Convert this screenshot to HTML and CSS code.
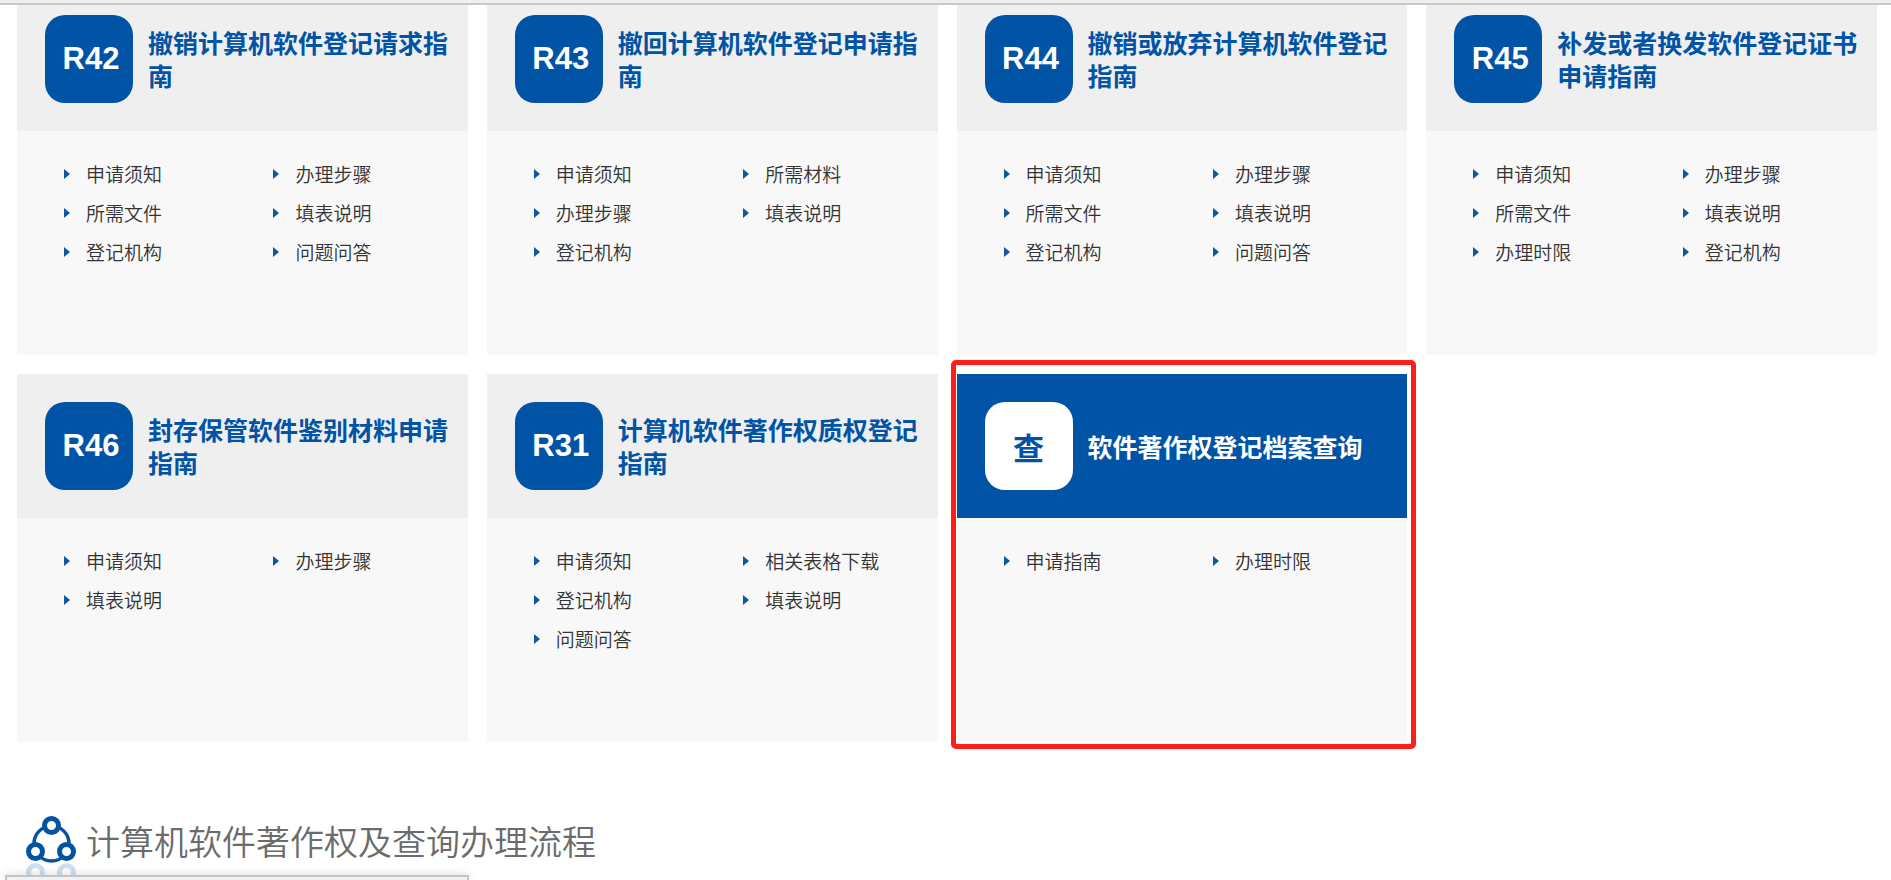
FILE: index.html
```html
<!DOCTYPE html>
<html lang="zh-CN">
  <head>
    <meta charset="utf-8">
    <meta name="viewport" content="width=device-width, initial-scale=1.0">
    <title>软件著作权登记</title>
    <link rel="stylesheet" href="styles.css">
  </head>
  <body>
    <div class="top-bar"></div>

    <main class="page">
      <div class="guide-list">
        <section class="card">
          <div class="card-head">
            <span class="badge">R42</span>
            <h3 class="card-title">撤销计算机软件登记请求指南</h3>
          </div>
          <ul class="card-links">
            <li><a href="#">申请须知</a></li>
            <li><a href="#">办理步骤</a></li>
            <li><a href="#">所需文件</a></li>
            <li><a href="#">填表说明</a></li>
            <li><a href="#">登记机构</a></li>
            <li><a href="#">问题问答</a></li>
          </ul>
        </section>

        <section class="card">
          <div class="card-head">
            <span class="badge">R43</span>
            <h3 class="card-title">撤回计算机软件登记申请指南</h3>
          </div>
          <ul class="card-links">
            <li><a href="#">申请须知</a></li>
            <li><a href="#">所需材料</a></li>
            <li><a href="#">办理步骤</a></li>
            <li><a href="#">填表说明</a></li>
            <li><a href="#">登记机构</a></li>
          </ul>
        </section>

        <section class="card">
          <div class="card-head">
            <span class="badge">R44</span>
            <h3 class="card-title">撤销或放弃计算机软件登记指南</h3>
          </div>
          <ul class="card-links">
            <li><a href="#">申请须知</a></li>
            <li><a href="#">办理步骤</a></li>
            <li><a href="#">所需文件</a></li>
            <li><a href="#">填表说明</a></li>
            <li><a href="#">登记机构</a></li>
            <li><a href="#">问题问答</a></li>
          </ul>
        </section>

        <section class="card">
          <div class="card-head">
            <span class="badge">R45</span>
            <h3 class="card-title">补发或者换发软件登记证书申请指南</h3>
          </div>
          <ul class="card-links">
            <li><a href="#">申请须知</a></li>
            <li><a href="#">办理步骤</a></li>
            <li><a href="#">所需文件</a></li>
            <li><a href="#">填表说明</a></li>
            <li><a href="#">办理时限</a></li>
            <li><a href="#">登记机构</a></li>
          </ul>
        </section>

        <section class="card">
          <div class="card-head">
            <span class="badge">R46</span>
            <h3 class="card-title">封存保管软件鉴别材料申请指南</h3>
          </div>
          <ul class="card-links">
            <li><a href="#">申请须知</a></li>
            <li><a href="#">办理步骤</a></li>
            <li><a href="#">填表说明</a></li>
          </ul>
        </section>

        <section class="card">
          <div class="card-head">
            <span class="badge">R31</span>
            <h3 class="card-title">计算机软件著作权质权登记指南</h3>
          </div>
          <ul class="card-links">
            <li><a href="#">申请须知</a></li>
            <li><a href="#">相关表格下载</a></li>
            <li><a href="#">登记机构</a></li>
            <li><a href="#">填表说明</a></li>
            <li><a href="#">问题问答</a></li>
          </ul>
        </section>

        <section class="card active">
          <div class="card-head">
            <span class="badge">查</span>
            <h3 class="card-title">软件著作权登记档案查询</h3>
          </div>
          <ul class="card-links">
            <li><a href="#">申请指南</a></li>
            <li><a href="#">办理时限</a></li>
          </ul>
        </section>
      </div>

      <div class="section-header">
        <svg class="section-icon" viewBox="0 0 50 64" fill="none">
          <g stroke="#0353a3">
            <circle cx="25.5" cy="28.5" r="17.5" stroke-width="3.5"></circle>
            <circle cx="25.5" cy="10.5" r="7" fill="#fff" stroke-width="5"></circle>
            <circle cx="9.5" cy="36.5" r="7" fill="#fff" stroke-width="5"></circle>
            <circle cx="40.5" cy="36.5" r="7" fill="#fff" stroke-width="5"></circle>
          </g>
          <!-- reflection -->
          <g stroke="#0353a3" stroke-width="5" opacity="0.18">
            <circle cx="9.5" cy="57.5" r="7"></circle>
            <circle cx="40.5" cy="57.5" r="7"></circle>
          </g>
        </svg>
        <h2 class="section-title">计算机软件著作权及查询办理流程</h2>
      </div>
    </main>

    <div class="status-bar"></div>
  </body>
</html>
```

FILE: styles.css
```css
* {
  margin: 0;
  padding: 0;
  box-sizing: border-box;
}

body {
  height: 100vh;
  overflow: hidden;
  background: #fff;
  font-family: "Noto Sans CJK SC", sans-serif;
  color: #333;
}

.top-bar {
  position: relative;
  z-index: 10;
  height: 5px;
  background: #efefef;
  border-bottom: 2px solid #c8c8c8;
}

.page {
  padding: 0 14px 0 17px;
}

/* list is scrolled a little way under the top bar */
.guide-list {
  display: grid;
  grid-template-columns: repeat(4, 1fr);
  gap: 19px;
  margin-top: -18px;
}

.card {
  position: relative;
  display: flex;
  flex-direction: column;
  background: #f8f8f8;
}

.card-head {
  display: flex;
  align-items: center;
  gap: 15px;
  height: 144px;
  padding: 0 0 0 28px;
  background: #efefef;
}

.badge {
  flex: none;
  display: flex;
  align-items: center;
  justify-content: center;
  width: 88px;
  height: 88px;
  padding-left: 4px;
  border-radius: 20px;
  background: #0053a5;
  color: #fff;
  font-family: "Liberation Sans", "Noto Sans CJK SC", sans-serif;
  font-size: 31px;
  font-weight: bold;
}

.card-title {
  font-size: 25px;
  line-height: 33px;
  font-weight: bold;
  color: #0053a5;
}

.card-links {
  display: grid;
  grid-template-columns: 1fr 1fr;
  align-content: start;
  min-height: 224px;
  padding: 23px 16px;
  list-style: none;
}

.card-links li {
  display: flex;
  align-items: center;
  padding-left: 31px;
  line-height: 39px;
}

.card-links li::before {
  content: "";
  margin-right: 16px;
  border-left: 6px solid #0f579f;
  border-top: 5px solid transparent;
  border-bottom: 5px solid transparent;
}

.card-links a {
  font-size: 19px;
  font-weight: 350;
  color: #333;
  text-decoration: none;
}

.active .card-head {
  background: #0053a5;
}

.active .badge {
  padding-left: 0;
  background: #fff;
  color: #0053a5;
}

.active .card-title {
  color: #fff;
}

.active::after {
  content: "";
  position: absolute;
  top: -14px;
  right: -9px;
  bottom: -7px;
  left: -6px;
  border: 5px solid #fa2018;
  border-radius: 5px;
  pointer-events: none;
}

.section-header {
  display: flex;
  align-items: flex-start;
  gap: 10px;
  margin-top: 73px;
  padding-left: 9px;
}

.section-icon {
  width: 50px;
  height: 64px;
}

.section-title {
  font-size: 34px;
  line-height: 52px;
  font-weight: 350;
  color: #6b6b6b;
}

.status-bar {
  position: fixed;
  left: 5px;
  bottom: 0;
  width: 464px;
  height: 5px;
  background: #f2f2f2;
  border: 2px solid #c4c4c4;
  border-bottom: none;
  box-shadow: 0 0 10px rgba(0, 0, 0, 0.2);
}
```
